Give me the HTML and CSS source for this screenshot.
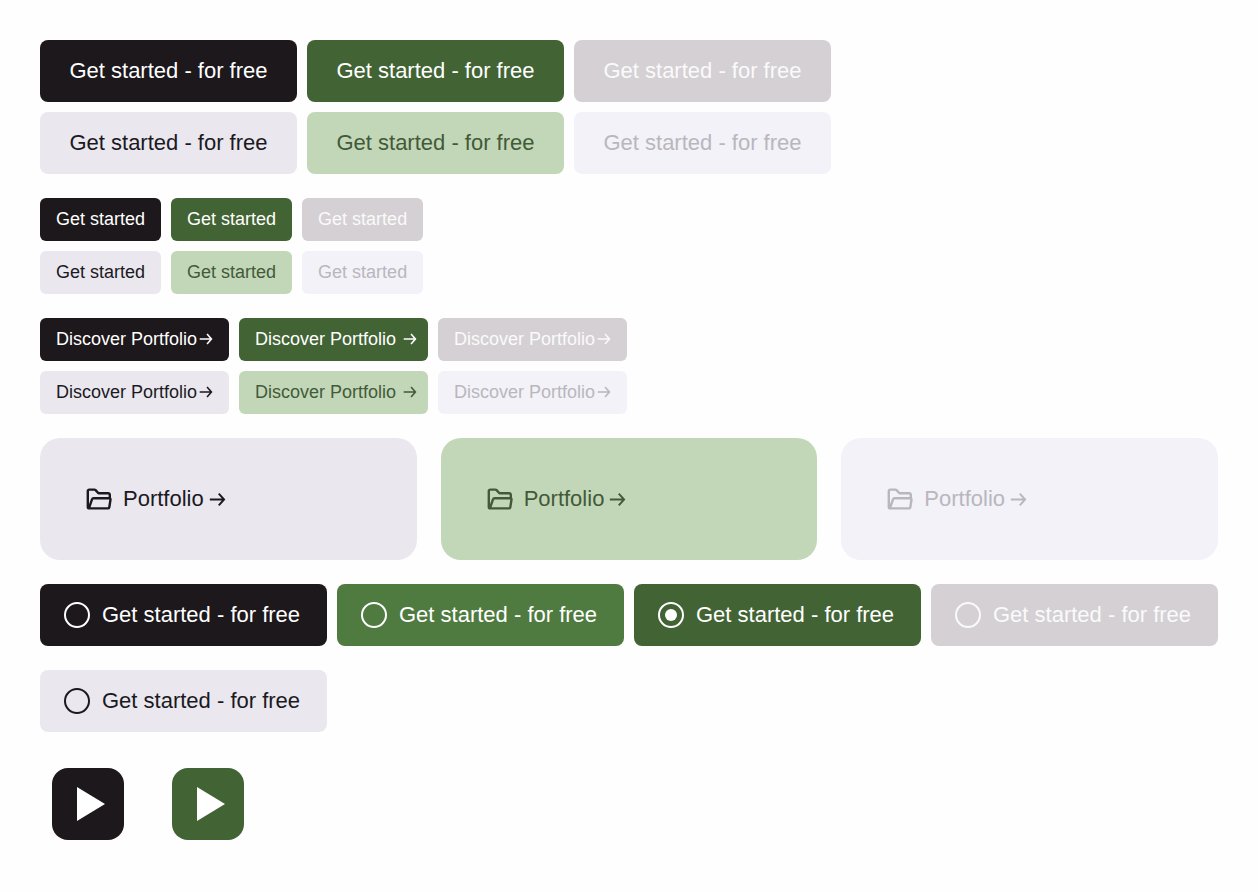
FILE: index.html
```html
<!DOCTYPE html>
<html lang="en">
<head>
<meta charset="utf-8">
<title>Button styles</title>
<link rel="stylesheet" href="styles.css">
</head>
<body>
<svg class="defs" aria-hidden="true">
  <symbol id="arrow" viewBox="0 0 16 16"><path d="M.8 8H14M9.2 2.4 14.2 8 9.2 13.6" fill="none" stroke="currentColor" stroke-width="1.8"/></symbol>
  <symbol id="folder" viewBox="0 0 26 22"><path d="M3.4 20.4H3A1.2 1.2 0 0 1 1.8 19.2V3A1.4 1.4 0 0 1 3.2 1.6H8.4Q9.1 1.6 9.6 2.1L12 4.8Q12.4 5.2 13 5.2H22.2A1.6 1.6 0 0 1 23.8 6.8V9.8M3 20 6 11.4Q6.4 10.2 7.6 10.2H23.4A1.1 1.1 0 0 1 24.5 11.5L23.3 19.2Q23.1 20.4 21.9 20.4H3.2" fill="none" stroke="currentColor" stroke-width="2.4" stroke-linejoin="round"/></symbol>
  <symbol id="play" viewBox="0 0 28 34"><path d="M0 0 28 17 0 34Z" fill="currentColor"/></symbol>
</svg>
<main class="page">
  <section class="group">
    <div class="row">
      <button class="btn large dark">Get started - for free</button>
      <button class="btn large green">Get started - for free</button>
      <button class="btn large dark-off" disabled>Get started - for free</button>
    </div>
    <div class="row">
      <button class="btn large light">Get started - for free</button>
      <button class="btn large mint">Get started - for free</button>
      <button class="btn large light-off" disabled>Get started - for free</button>
    </div>
  </section>
  <section class="group">
    <div class="row">
      <button class="btn small dark">Get started</button>
      <button class="btn small green">Get started</button>
      <button class="btn small dark-off" disabled>Get started</button>
    </div>
    <div class="row">
      <button class="btn small light">Get started</button>
      <button class="btn small mint">Get started</button>
      <button class="btn small light-off" disabled>Get started</button>
    </div>
  </section>
  <section class="group">
    <div class="row">
      <button class="btn link dark">Discover Portfolio<svg class="arrow"><use href="#arrow"/></svg></button>
      <button class="btn link shifted green">Discover Portfolio<svg class="arrow"><use href="#arrow"/></svg></button>
      <button class="btn link dark-off" disabled>Discover Portfolio<svg class="arrow"><use href="#arrow"/></svg></button>
    </div>
    <div class="row">
      <button class="btn link light">Discover Portfolio<svg class="arrow"><use href="#arrow"/></svg></button>
      <button class="btn link shifted mint">Discover Portfolio<svg class="arrow"><use href="#arrow"/></svg></button>
      <button class="btn link light-off" disabled>Discover Portfolio<svg class="arrow"><use href="#arrow"/></svg></button>
    </div>
  </section>
  <section class="cards">
    <button class="card light"><svg class="folder"><use href="#folder"/></svg><span>Portfolio</span><svg class="card-arrow"><use href="#arrow"/></svg></button>
    <button class="card mint"><svg class="folder"><use href="#folder"/></svg><span>Portfolio</span><svg class="card-arrow"><use href="#arrow"/></svg></button>
    <button class="card light-off" disabled><svg class="folder"><use href="#folder"/></svg><span>Portfolio</span><svg class="card-arrow"><use href="#arrow"/></svg></button>
  </section>
  <section class="options">
    <label class="option dark"><input class="radio" type="radio" name="plan">Get started - for free</label>
    <label class="option leaf"><input class="radio" type="radio" name="plan">Get started - for free</label>
    <label class="option green"><input class="radio" type="radio" name="plan" checked>Get started - for free</label>
    <label class="option dark-off"><input class="radio" type="radio" name="plan" disabled>Get started - for free</label>
    <label class="option light"><input class="radio" type="radio" name="plan">Get started - for free</label>
  </section>
  <section class="players">
    <button class="player dark" aria-label="Play"><svg class="play"><use href="#play"/></svg></button>
    <button class="player green" aria-label="Play"><svg class="play"><use href="#play"/></svg></button>
  </section>
</main>
</body>
</html>
```

FILE: styles.css
```css
* { box-sizing: border-box; }
body {
  margin: 0;
  background: #fefefe;
  font-family: "Liberation Sans", Arial, sans-serif;
}
.defs { display: none; }
button { font: inherit; border: 0; }
.page {
  display: flex;
  flex-direction: column;
  gap: 24px;
  padding: 40px;
}
.group { display: flex; flex-direction: column; gap: 10px; }
.row { display: flex; gap: 10px; }

.dark { background: #1c181b; color: #fff; }
.green { background: #426334; color: #fff; }
.leaf { background: #4f7b40; color: #fff; }
.dark-off { background: #d5d0d4; color: #fafafa; }
.light { background: #eae8ee; color: #1b191f; }
.mint { background: #c2d7b8; color: #435a38; }
.light-off { background: #f3f2f8; color: #b9b7bd; }

.btn {
  display: flex;
  align-items: center;
  justify-content: center;
  padding: 0 16px 2px;
  border-radius: 6px;
  font-size: 18px;
  line-height: 24px;
  white-space: nowrap;
}
.large { min-width: 257px; height: 62px; padding: 0 16px; border-radius: 8px; font-size: 22px; }
.small { min-width: 121px; height: 43px; }
.link { min-width: 189px; height: 43px; justify-content: flex-start; }
.shifted { padding-right: 11px; }
.arrow { width: 14px; height: 14px; margin-left: auto; }

.cards { display: grid; grid-template-columns: repeat(3, 1fr); gap: 24px; }
.card {
  display: flex;
  align-items: center;
  height: 122px;
  padding: 0 46px;
  border-radius: 20px;
  font-size: 22px;
  line-height: 28px;
}
.folder { width: 26px; height: 22px; margin-right: 11px; }
.card-arrow { width: 17px; height: 17px; margin-left: 5px; }

.options { display: grid; grid-template-columns: repeat(4, 1fr); gap: 24px 10px; }
.option {
  display: flex;
  align-items: center;
  gap: 12px;
  height: 62px;
  padding: 0 24px;
  border-radius: 8px;
  font-size: 22px;
  line-height: 24px;
  white-space: nowrap;
}
.radio {
  appearance: none;
  display: grid;
  place-items: center;
  flex: none;
  width: 26px;
  height: 26px;
  margin: 0;
  border: 2px solid currentColor;
  border-radius: 50%;
  color: inherit;
}
.radio:checked::before {
  content: "";
  width: 12px;
  height: 12px;
  border-radius: 50%;
  background: currentColor;
}

.players { display: flex; gap: 48px; padding: 12px; }
.player {
  display: grid;
  place-items: center;
  width: 72px;
  height: 72px;
  padding: 0 0 0 6px;
  border-radius: 16px;
}
.play { width: 28px; height: 34px; }
```
